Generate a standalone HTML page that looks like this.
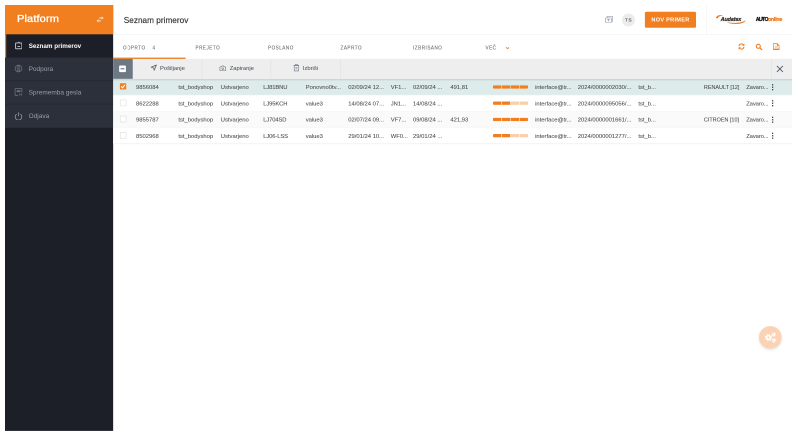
<!DOCTYPE html>
<html lang="sl">
<head>
<meta charset="utf-8">
<title>Seznam primerov</title>
<style>
*{box-sizing:border-box;margin:0;padding:0}
html,body{width:799px;height:439px;overflow:hidden;background:#fff}
body{font-family:"Liberation Sans",sans-serif;position:relative;color:#444;-webkit-text-size-adjust:none}
#wrap{position:absolute;left:0;top:0;width:1598px;height:878px;will-change:transform;transform:scale(.5);transform-origin:0 0;overflow:hidden}
#inner{position:absolute;left:0;top:0;width:799px;height:439px;zoom:2}
.abs{position:absolute}
.t{position:absolute;white-space:nowrap;line-height:1}
/* sidebar */
#side{position:absolute;left:5px;top:5px;width:108.2px;height:426px}
#brand{position:absolute;left:0;top:0;width:100%;height:29.3px}
#brand .name{left:11.9px;top:9px;font-size:9.7px;color:#fff;letter-spacing:.1px;-webkit-text-stroke:.32px #fff;transform:scaleX(1.14);transform-origin:0 0}
.mi{position:absolute;left:0;width:100%;height:23.3px}
.mi .lbl{left:23.6px;top:8.55px;font-size:6.5px;color:#9a9ea6}
.mi.act .lbl{color:#fff;font-weight:bold;left:23.7px;letter-spacing:0;font-size:6.3px;top:8.9px}
.mi svg{position:absolute}
/* header */
#title{left:123.8px;top:15.85px;font-size:8.2px;color:#3a3a3a;-webkit-text-stroke:.2px #3a3a3a;letter-spacing:.02px}
/* tabs */
.tab{top:45.3px;font-size:5.2px;letter-spacing:.6px;color:#6c6e77;-webkit-text-stroke:.1px #6c6e77;transform:scaleX(.88);transform-origin:0 0}
/* toolbar */
.btxt{top:65.15px;font-size:5.8px;color:#4f5761;-webkit-text-stroke:.05px #4f5761}
/* rows */
.row{position:absolute;left:113.2px;width:678.8px;height:16.2px}
.row span{position:absolute;top:5.3px;font-size:5.85px;line-height:1;white-space:nowrap;color:#4c4c4c;-webkit-text-stroke:.06px #4c4c4c}

.dots{position:absolute;left:658.9px;top:4.9px;width:1.25px;height:6.5px}
</style>
</head>
<body>
<div id="wrap"><div id="inner">
<svg id="bg" class="abs" style="left:0;top:0" width="799" height="439" viewBox="0 0 799 439">
<defs><linearGradient id="sh" x1="0" y1="0" x2="0" y2="1"><stop offset="0" stop-color="#000" stop-opacity=".13"/><stop offset="1" stop-color="#000" stop-opacity="0"/></linearGradient></defs>
<rect x="5" y="5" width="108.15" height="425.9" fill="#1c1f27"/>
<rect x="5" y="5" width="108.15" height="29.3" fill="#f17e1f"/>
<rect x="5" y="57.6" width="108.15" height="69.8" fill="#2c303a"/>
<rect x="5" y="34.3" width="1.2" height="23.3" fill="#f17e1f"/>
<rect x="5" y="80.55" width="108.15" height=".6" fill="#22252d"/>
<rect x="5" y="103.8" width="108.15" height=".6" fill="#22252d"/>
<rect x="113.15" y="34.1" width="678.85" height=".7" fill="#f2f2f2"/>
<rect x="706.3" y="5" width=".6" height="29.4" fill="#f1f1f1"/>
<circle cx="628.5" cy="20" r="6.5" fill="#ececec"/>
<rect x="644.9" y="11.7" width="51.1" height="16.05" rx="1.4" fill="#f17e1f"/>
<rect x="113.15" y="57.6" width="72.45" height="1.4" fill="#f17e1f"/>
<rect x="113.15" y="78.90" width="678.85" height="16.23" fill="#deebeb"/>
<rect x="113.15" y="95.13" width="678.85" height="16.23" fill="#ffffff"/>
<rect x="113.15" y="111.36" width="678.85" height="16.23" fill="#fafafa"/>
<rect x="113.15" y="127.59" width="678.85" height="16.23" fill="#ffffff"/>
<rect x="113.15" y="94.88" width="678.85" height=".5" fill="#f4f4f4"/>
<rect x="113.15" y="111.11" width="678.85" height=".5" fill="#f4f4f4"/>
<rect x="113.15" y="127.34" width="678.85" height=".5" fill="#f4f4f4"/>
<rect x="113.15" y="143.52" width="678.85" height=".6" fill="#ebebeb"/>
<rect x="113.15" y="78.8" width="678.85" height="2.4" fill="url(#sh)"/>
<rect x="113.15" y="58.9" width="678.85" height="19.95" fill="#eeeeee"/>
<rect x="113.15" y="58.9" width="19.6" height="19.95" fill="#6c7883"/>
<rect x="201.60" y="58.9" width=".6" height="19.95" fill="#e1e1e1"/>
<rect x="270.50" y="58.9" width=".6" height="19.95" fill="#e1e1e1"/>
<rect x="340.10" y="58.9" width=".6" height="19.95" fill="#e1e1e1"/>
<rect x="771.10" y="58.9" width=".6" height="19.95" fill="#e1e1e1"/>
<rect x="119.1" y="65.5" width="6.8" height="6.6" rx="1" fill="#fff"/>
<rect x="120.6" y="68.3" width="3.8" height="1" fill="#56616b"/>
<rect x="119.9" y="83.20" width="6.3" height="6.3" rx=".5" fill="#f17e1f"/>
<path d="M121.1 86.40l1.4 1.4l2.5-3" fill="none" stroke="#fff" stroke-width="1.1"/>
<rect x="120.2" y="99.88" width="5.9" height="6" rx=".4" fill="#fff" stroke="#dcdcdc" stroke-width=".6"/>
<rect x="120.2" y="116.11" width="5.9" height="6" rx=".4" fill="#fff" stroke="#dcdcdc" stroke-width=".6"/>
<rect x="120.2" y="132.34" width="5.9" height="6" rx=".4" fill="#fff" stroke="#dcdcdc" stroke-width=".6"/>
<clipPath id="c0"><rect x="492.8" y="85.30" width="35.4" height="3.4" rx="1.7"/></clipPath><g clip-path="url(#c0)"><rect x="492.80" y="85.30" width="8.44" height="3.4" fill="#f17e1f"/><rect x="501.79" y="85.30" width="8.44" height="3.4" fill="#f17e1f"/><rect x="510.78" y="85.30" width="8.44" height="3.4" fill="#f17e1f"/><rect x="519.76" y="85.30" width="8.44" height="3.4" fill="#f17e1f"/></g>
<clipPath id="c1"><rect x="492.8" y="101.53" width="35.4" height="3.4" rx="1.7"/></clipPath><g clip-path="url(#c1)"><rect x="492.80" y="101.53" width="8.44" height="3.4" fill="#f17e1f"/><rect x="501.79" y="101.53" width="8.44" height="3.4" fill="#f17e1f"/><rect x="510.78" y="101.53" width="8.44" height="3.4" fill="#f9cfac"/><rect x="519.76" y="101.53" width="8.44" height="3.4" fill="#f9cfac"/></g>
<clipPath id="c2"><rect x="492.8" y="117.76" width="35.4" height="3.4" rx="1.7"/></clipPath><g clip-path="url(#c2)"><rect x="492.80" y="117.76" width="8.44" height="3.4" fill="#f17e1f"/><rect x="501.79" y="117.76" width="8.44" height="3.4" fill="#f17e1f"/><rect x="510.78" y="117.76" width="8.44" height="3.4" fill="#f17e1f"/><rect x="519.76" y="117.76" width="8.44" height="3.4" fill="#f17e1f"/></g>
<clipPath id="c3"><rect x="492.8" y="133.99" width="35.4" height="3.4" rx="1.7"/></clipPath><g clip-path="url(#c3)"><rect x="492.80" y="133.99" width="8.44" height="3.4" fill="#f17e1f"/><rect x="501.79" y="133.99" width="8.44" height="3.4" fill="#f17e1f"/><rect x="510.78" y="133.99" width="8.44" height="3.4" fill="#f9cfac"/><rect x="519.76" y="133.99" width="8.44" height="3.4" fill="#f9cfac"/></g>
<defs><filter id="fs" x="-50%" y="-50%" width="200%" height="200%"><feGaussianBlur stdDeviation="1.9"/></filter></defs>
<circle cx="770.3" cy="338.6" r="10.6" fill="#000" opacity=".17" filter="url(#fs)"/>
<circle cx="770.3" cy="337.3" r="11.3" fill="#fbd3b4"/>
<circle cx="768.5" cy="337.45" r="2.7" fill="#fff"/><circle cx="768.5" cy="337.45" r="3.15" fill="none" stroke="#fff" stroke-width="1.0" stroke-dasharray="1.286 1.188"/><circle cx="768.5" cy="337.45" r="1.05" fill="#fbd3b4"/>
<circle cx="773.8" cy="334.5" r="1.5" fill="#fff"/><circle cx="773.8" cy="334.5" r="1.85" fill="none" stroke="#fff" stroke-width="0.7" stroke-dasharray="0.756 0.697"/><circle cx="773.8" cy="334.5" r="0.55" fill="#fbd3b4"/>
<circle cx="773.8" cy="340.4" r="1.5" fill="#fff"/><circle cx="773.8" cy="340.4" r="1.85" fill="none" stroke="#fff" stroke-width="0.7" stroke-dasharray="0.756 0.697"/><circle cx="773.8" cy="340.4" r="0.55" fill="#fbd3b4"/>
</svg>

<!-- SIDEBAR -->
<div id="side">
  <div id="brand">
    <div class="t name">Platform</div>
    <svg class="abs" style="left:91.6px;top:11.6px" width="7.2" height="6" viewBox="0 0 7.2 6">
      <g fill="#fbe3cf">
        <rect x="2.6" y="1.1" width="3" height=".9"/><path d="M5.2 0 L7.2 1.55 L5.2 3.1Z"/>
        <rect x="1.6" y="3.9" width="3" height=".9"/><path d="M2 2.8 L0 4.35 L2 5.9Z"/>
      </g>
    </svg>
  </div>
  <div class="mi act" style="top:29.3px">
    <svg style="left:9.8px;top:7.4px" width="7.4" height="7.8" viewBox="0 0 7.4 7.8"><rect x=".55" y="1.5" width="6.3" height="5.7" rx=".5" fill="none" stroke="#b6b9be" stroke-width="1"/><rect x="2.9" y=".3" width="1.6" height="2.2" rx=".6" fill="#b6b9be"/><circle cx="3.7" cy="1.9" r=".55" fill="#1c1f27"/><rect x="2.5" y="4.5" width="2.4" height=".9" fill="#d0d2d5"/></svg>
    <div class="t lbl">Seznam primerov</div>
  </div>
  <div class="mi" style="top:52.6px">
    <svg style="left:9.25px;top:7.1px" width="8" height="8" viewBox="0 0 8 8"><g fill="none" stroke="#6c7079" stroke-width=".75"><circle cx="4" cy="4" r="3.4"/><ellipse cx="4" cy="4" rx="1.35" ry="3.4" stroke-width=".65"/><path d="M4 .6V7.4" stroke-width=".5"/></g></svg>
    <div class="t lbl" style="top:8.15px">Podpora</div>
  </div>
  <div class="mi" style="top:75.85px">
    <svg style="left:9.25px;top:7.35px" width="8" height="8" viewBox="0 0 8 8"><path d="M.6 7.4V.6H7.4V4.4" fill="none" stroke="#6c7079" stroke-width=".8"/><path d="M.6 7.4H3.6" fill="none" stroke="#6c7079" stroke-width=".8"/><rect x="2.2" y="2.2" width="3.8" height="1.9" fill="#6c7079"/><rect x="4.8" y="5.6" width="1" height="1.8" fill="#6c7079"/><rect x="6.4" y="5.6" width="1" height="1.8" fill="#6c7079"/></svg>
    <div class="t lbl" style="top:7.95px">Sprememba gesla</div>
  </div>
  <div class="mi" style="top:99.1px">
    <svg style="left:9.25px;top:7.9px" width="8" height="8" viewBox="0 0 8 8"><path d="M2.2 2.1A3.3 3.3 0 1 0 5.8 2.1" fill="none" stroke="#9a9ea6" stroke-width=".75"/><path d="M4 .3V4.2" stroke="#9a9ea6" stroke-width=".75"/></svg>
    <div class="t lbl">Odjava</div>
  </div>
</div>

<!-- HEADER -->
<div class="t" id="title">Seznam primerov</div>

<!-- header icons -->
<svg class="abs" style="left:605px;top:16.1px" width="8" height="7" viewBox="0 0 8 7"><g fill="none" stroke="#959ca6" stroke-width=".62"><path d="M2.1 1.9V.45H7.5V5.3H6.4"/><rect x=".4" y="1.9" width="6" height="4.6" rx=".6"/><path d="M2.2 3.4H4.6M3.4 3.4V5.2" stroke-width=".8"/></g></svg>
<div class="t" style="left:624.9px;top:17.55px;font-size:4.9px;letter-spacing:.45px;color:#4b4e58;-webkit-text-stroke:.1px #4b4e58">TS</div>
<div class="t" style="left:651.4px;top:16.95px;font-size:5.6px;font-weight:bold;letter-spacing:.27px;color:#fff">NOV PRIMER</div>

<!-- logos -->
<svg class="abs" style="left:715px;top:13px" width="32" height="12" viewBox="0 0 32 12">
  <path d="M1.1 4.9C1.4 3 4 1.9 7.4 2.4C4.8 2.9 3.2 3.6 2.6 5.2Z" fill="#e8741c" stroke="#e8741c" stroke-width=".3"/>
  <path d="M12.5 9.5C19 10.6 27 10.2 30.5 7.5C29 10.8 20 11.9 12.5 9.5Z" fill="#e8741c" stroke="#e8741c" stroke-width=".35"/>
  <text x="5.7" y="7.75" font-family="Liberation Sans" font-weight="bold" font-style="italic" font-size="5.3" fill="#333" stroke="#333" stroke-width=".3" textLength="20.6" lengthAdjust="spacingAndGlyphs">Audatex</text>
</svg>
<div class="t" style="left:755.8px;top:17.2px;font-size:5.2px;font-weight:bold;letter-spacing:-.62px;color:#111;-webkit-text-stroke:.25px #111">AUTO<span style="color:#ee7a1c;-webkit-text-stroke:.25px #ee7a1c;letter-spacing:-.2px">online</span></div>

<!-- TABS -->
<div class="t tab" style="left:123px">ODPRTO</div>
<div class="t tab" style="left:152.4px">4</div>
<div class="t tab" style="left:195.5px">PREJETO</div>
<div class="t tab" style="left:268px">POSLANO</div>
<div class="t tab" style="left:340.6px">ZAPRTO</div>
<div class="t tab" style="left:413px">IZBRISANO</div>
<div class="t tab" style="left:485.6px">VEČ</div>
<svg class="abs" style="left:505.3px;top:46.7px" width="4" height="3" viewBox="0 0 4 3"><path d="M.4 .6L2 2.2L3.6 .6" fill="none" stroke="#f17e1f" stroke-width=".8"/></svg>

<!-- tab-row icons -->
<svg class="abs" style="left:738.2px;top:43.2px" width="7" height="7" viewBox="0 0 7 7"><g fill="none" stroke="#f17e1f" stroke-width="1"><path d="M1 3.2A2.6 2.6 0 0 1 5.6 1.9"/><path d="M6 3.8A2.6 2.6 0 0 1 1.4 5.1"/></g><path d="M6.4 .4V2.8H4Z" fill="#f17e1f"/><path d="M.6 6.6V4.2H3Z" fill="#f17e1f"/></svg>
<svg class="abs" style="left:755.6px;top:43.3px" width="7" height="7" viewBox="0 0 7 7"><circle cx="2.8" cy="2.8" r="2" fill="none" stroke="#f17e1f" stroke-width="1.1"/><path d="M4.3 4.3L6.4 6.4" stroke="#f17e1f" stroke-width="1.2"/></svg>
<svg class="abs" style="left:773.2px;top:43px" width="6.6" height="7.2" viewBox="0 0 6.6 7.2"><path d="M.5 .5H4.2L6.1 2.4V6.7H.5Z" fill="#fff6ee" stroke="#f17e1f" stroke-width=".65"/><rect x=".5" y="5.7" width="5.6" height="1.1" fill="#f17e1f"/><rect x="1.8" y="3.2" width="3" height="1.5" fill="#f9c9a0"/><path d="M4 .5V2.6H6.1Z" fill="#f17e1f"/></svg>

<!-- TOOLBAR -->
<svg class="abs" style="left:150.4px;top:64.6px" width="6.4" height="6.4" viewBox="0 0 6.4 6.4"><path d="M5.9 .5L.6 2.7L3 3.4L3.7 5.8Z" fill="#4e5964" fill-opacity=".12" stroke="#4e5964" stroke-width=".7" stroke-linejoin="round"/></svg>
<div class="t btxt" style="left:160px">Pošiljanje</div>
<svg class="abs" style="left:219.6px;top:65.3px" width="6.6" height="5.8" viewBox="0 0 6.6 5.8"><path d="M1.1 1.3H2.1L2.6 .4H4L4.5 1.3H5.5Q6.2 1.3 6.2 2V4.6Q6.2 5.3 5.5 5.3H1.1Q.4 5.3 .4 4.6V2Q.4 1.3 1.1 1.3Z" fill="none" stroke="#737b86" stroke-width=".65"/><circle cx="3.3" cy="3.3" r=".9" fill="none" stroke="#737b86" stroke-width=".6"/></svg>
<div class="t btxt" style="left:229.7px">Zapiranje</div>
<svg class="abs" style="left:293.4px;top:64.2px" width="5.8" height="7.4" viewBox="0 0 5.8 7.4"><path d="M.7 1.4H5.1V6.9H.7Z" fill="none" stroke="#737b86" stroke-width=".6"/><path d="M0 1.4H5.8M1.9 1.2V.4H3.9V1.2" fill="none" stroke="#737b86" stroke-width=".6"/><rect x="1.9" y="3" width="2" height=".6" fill="#737b86"/><rect x="1.9" y="4.6" width="2" height=".6" fill="#737b86"/></svg>
<div class="t btxt" style="left:302.9px">Izbriši</div>
<svg class="abs" style="left:776.6px;top:65.5px" width="6.8" height="6.8" viewBox="0 0 6.8 6.8"><path d="M.4 .4L6.4 6.4M6.4 .4L.4 6.4" stroke="#4d5862" stroke-width=".9"/></svg>

<!-- ROWS -->
<div class="row r1" style="top:78.9px">
  
  <span style="left:22.8px">9856084</span><span style="left:65.2px">tst_bodyshop</span><span style="left:107.6px">Ustvarjeno</span><span style="left:150px;letter-spacing:-.12px">LJ81BNU</span><span style="left:192.5px">Ponovno0tv...</span><span style="left:235px">02/09/24 12...</span><span style="left:277.5px">VF1...</span><span style="left:299.8px">02/09/24 ...</span><span style="left:337.2px">491,81</span>
  <span style="left:421.9px">interface@tr...</span><span style="left:464.6px">2024/0000002030/...</span><span style="left:525.2px">tst_b...</span><span style="left:590.7px;font-size:5.45px;margin-top:.2px">RENAULT [12]</span><span style="left:633px;letter-spacing:-.09px">Zavaro...</span>
  <svg class="dots" viewBox="0 0 1.3 6.4"><g fill="#444"><rect y="0" width="1.3" height="1.4"/><rect y="2.5" width="1.3" height="1.4"/><rect y="5" width="1.3" height="1.4"/></g></svg>
</div>
<div class="row r2" style="top:95.13px">
  
  <span style="left:22.8px">8622288</span><span style="left:65.2px">tst_bodyshop</span><span style="left:107.6px">Ustvarjeno</span><span style="left:150px;letter-spacing:-.12px">LJ95KCH</span><span style="left:192.5px">value3</span><span style="left:235px">14/08/24 07...</span><span style="left:277.5px">JN1...</span><span style="left:299.8px">14/08/24 ...</span>
  <span style="left:421.9px">interface@tr...</span><span style="left:464.6px">2024/0000095056/...</span><span style="left:525.2px">tst_b...</span><span style="left:633px;letter-spacing:-.09px">Zavaro...</span>
  <svg class="dots" viewBox="0 0 1.3 6.4"><g fill="#444"><rect y="0" width="1.3" height="1.4"/><rect y="2.5" width="1.3" height="1.4"/><rect y="5" width="1.3" height="1.4"/></g></svg>
</div>
<div class="row r3" style="top:111.36px">
  
  <span style="left:22.8px">9855787</span><span style="left:65.2px">tst_bodyshop</span><span style="left:107.6px">Ustvarjeno</span><span style="left:150px;letter-spacing:-.12px">LJ704SD</span><span style="left:192.5px">value3</span><span style="left:235px">02/07/24 09...</span><span style="left:277.5px">VF7...</span><span style="left:299.8px">09/08/24 ...</span><span style="left:337.2px">421,93</span>
  <span style="left:421.9px">interface@tr...</span><span style="left:464.6px">2024/0000001661/...</span><span style="left:525.2px">tst_b...</span><span style="left:590.7px;font-size:5.45px;margin-top:.2px">CITROEN [10]</span><span style="left:633px;letter-spacing:-.09px">Zavaro...</span>
  <svg class="dots" viewBox="0 0 1.3 6.4"><g fill="#444"><rect y="0" width="1.3" height="1.4"/><rect y="2.5" width="1.3" height="1.4"/><rect y="5" width="1.3" height="1.4"/></g></svg>
</div>
<div class="row r4" style="top:127.59px">
  
  <span style="left:22.8px">8502968</span><span style="left:65.2px">tst_bodyshop</span><span style="left:107.6px">Ustvarjeno</span><span style="left:150px;letter-spacing:-.12px">LJ06-LSS</span><span style="left:192.5px">value3</span><span style="left:235px">29/01/24 10...</span><span style="left:277.5px">WF0...</span><span style="left:299.8px">29/01/24 ...</span>
  <span style="left:421.9px">interface@tr...</span><span style="left:464.6px">2024/0000001277/...</span><span style="left:525.2px">tst_b...</span><span style="left:633px;letter-spacing:-.09px">Zavaro...</span>
  <svg class="dots" viewBox="0 0 1.3 6.4"><g fill="#444"><rect y="0" width="1.3" height="1.4"/><rect y="2.5" width="1.3" height="1.4"/><rect y="5" width="1.3" height="1.4"/></g></svg>
</div>

<!-- FAB -->
<!--FABSVG-->

</div></div>
</body>
</html>
